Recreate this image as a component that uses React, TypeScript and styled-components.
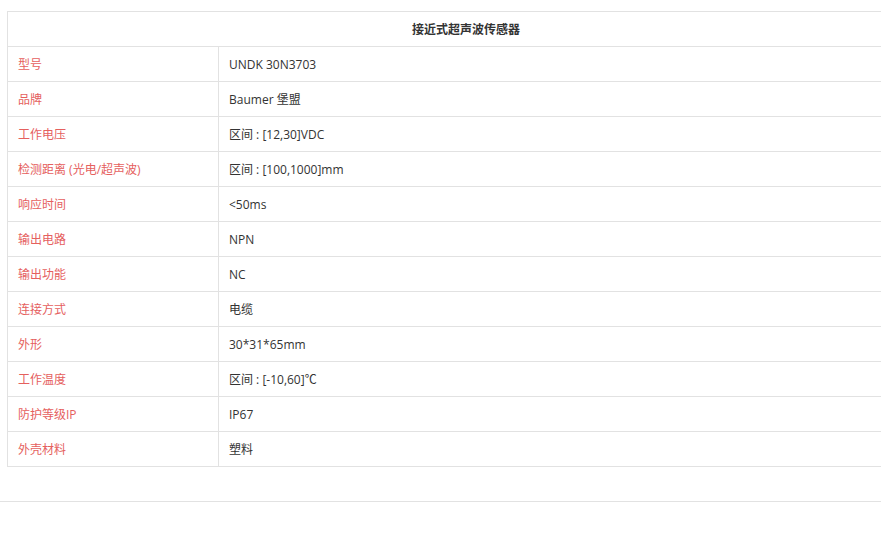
import styled, { createGlobalStyle } from "styled-components";

const GlobalStyle = createGlobalStyle`
    html, body {
        margin: 0;
        padding: 0;
        background: #fff;
        overflow: hidden;
    }
    body {
        font-family: "Open Sans", "Noto Sans CJK SC", sans-serif;
        font-size: 12px;
        color: #333;
    }
`;

const Page = styled.div`
    width: 881px;
    height: 552px;
    overflow: hidden;
    padding-top: 11px;
    box-sizing: border-box;
`;

const SpecTable = styled.table`
    margin-left: 7px;
    width: 918px;
    border-collapse: collapse;
    table-layout: fixed;
`;

const TitleCell = styled.th`
    height: 34px;
    padding: 0;
    border: 1px solid #e2e2e2;
    font-weight: bold;
    font-size: 12px;
    color: #333;
    text-align: center;
    background: #fff;
`;

const Cell = styled.td<{ $label?: boolean }>`
    height: 34px;
    padding: 0 0 0 10px;
    border: 1px solid #e2e2e2;
    color: ${(p) => (p.$label ? "#e5605e" : "#333")};
    font-size: 12px;
    white-space: nowrap;
    vertical-align: middle;
`;

const Divider = styled.div`
    margin-top: 34px;
    border-top: 1px solid #e2e2e2;
    width: 100%;
`;

const specs: [string, string][] = [
    ["型号", "UNDK 30N3703"],
    ["品牌", "Baumer 堡盟"],
    ["工作电压", "区间 : [12,30]VDC"],
    ["检测距离 (光电/超声波)", "区间 : [100,1000]mm"],
    ["响应时间", "<50ms"],
    ["输出电路", "NPN"],
    ["输出功能", "NC"],
    ["连接方式", "电缆"],
    ["外形", "30*31*65mm"],
    ["工作温度", "区间 : [-10,60]℃"],
    ["防护等级IP", "IP67"],
    ["外壳材料", "塑料"],
];

export default function App() {
    return (
        <Page>
            <GlobalStyle />
            <SpecTable>
                <colgroup>
                    <col style={{ width: 211 }} />
                    <col />
                </colgroup>
                <thead>
                    <tr>
                        <TitleCell colSpan={2}>接近式超声波传感器</TitleCell>
                    </tr>
                </thead>
                <tbody>
                    {specs.map(([label, value]) => (
                        <tr key={label}>
                            <Cell $label>{label}</Cell>
                            <Cell>{value}</Cell>
                        </tr>
                    ))}
                </tbody>
            </SpecTable>
            <Divider />
        </Page>
    );
}
